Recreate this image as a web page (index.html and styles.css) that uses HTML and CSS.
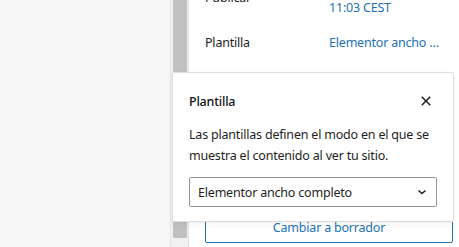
FILE: index.html
```html
<!DOCTYPE html>
<html lang="es">
<head>
<meta charset="utf-8">
<link rel="stylesheet" href="styles.css">
</head>
<body>
<div class="screen">
  <div class="canvas"></div>
  <div class="scrollbar"><div class="thumb"></div></div>
  <aside class="sidebar">
    <div class="rows">
      <div class="row row-tall">
        <span class="label">Publicar</span>
        <span class="value">1 de abril a las<br>11:03 CEST</span>
      </div>
      <div class="row">
        <span class="label">Plantilla</span>
        <span class="value">Elementor ancho …</span>
      </div>
    </div>
    <button class="draft-btn">Cambiar a borrador</button>
  </aside>
  <div class="popover">
    <div class="pop-head">
      <span class="pop-title">Plantilla</span>
      <button class="close" aria-label="Cerrar">
        <svg width="24" height="24" viewBox="0 0 24 24"><path d="M12 13.06l3.712 3.713 1.061-1.06L13.061 12l3.712-3.712-1.06-1.06L12 10.938 8.288 7.227l-1.061 1.06L10.939 12l-3.712 3.712 1.06 1.061L12 13.061z" fill="#1e1e1e"/></svg>
      </button>
    </div>
    <p class="pop-desc">Las plantillas definen el modo en el que se muestra el contenido al ver tu sitio.</p>
    <div class="select">
      <span>Elementor ancho completo</span>
      <svg class="chev" width="12" height="12" viewBox="0 0 12 12"><path d="M2.5 4.5L6 7.5l3.5-3" fill="none" stroke="#1e1e1e" stroke-width="1.5"/></svg>
    </div>
  </div>
</div>
</body>
</html>
```

FILE: styles.css
```css
* { box-sizing: border-box; }
html, body { margin: 0; padding: 0; }
body {
  width: 459px;
  height: 247px;
  overflow: hidden;
  font-family: "Noto Sans", "Open Sans", sans-serif;
  font-size: 12.5px;
  letter-spacing: -0.2px;
  color: #1e1e1e;
  background: #fff;
}
.screen {
  position: relative;
  display: flex;
  width: 459px;
  height: 247px;
  overflow: hidden;
}
.canvas {
  width: 170px;
  flex: none;
  background: #f6f6f6;
}
.scrollbar {
  width: 19px;
  flex: none;
  background: #f1f1f1;
  border-left: 1px solid #e6e6e6;
  border-right: 1px solid #e0e0e0;
  padding: 0 1px 0 2px;
}
.thumb {
  height: 238px;
  background: #c1c1c1;
}
.sidebar {
  flex: 1;
  background: #fff;
  padding: 0 7px 0 16px;
  display: flex;
  flex-direction: column;
}
.rows {
  margin-top: -22px;
  display: flex;
  flex-direction: column;
  gap: 6px;
}
.row {
  display: flex;
  align-items: center;
  min-height: 38px;
  line-height: 20px;
}
.row-tall { min-height: 40px; }
.label { width: 124px; flex: none; }
.value { color: #2271b1; }
.draft-btn {
  margin-top: auto;
  margin-bottom: 4px;
  height: 32px;
  width: 248px;
  background: #fff;
  border: 1px solid #2271b1;
  border-radius: 2px;
  color: #2271b1;
  font: inherit;
  letter-spacing: inherit;
}
.popover {
  position: absolute;
  left: 172px;
  top: 72px;
  width: 282px;
  height: 150px;
  background: #fff;
  border: 1px solid #ddd;
  border-radius: 2px;
  box-shadow: 0 2px 6px rgba(0,0,0,0.06);
  padding: 16px;
}
.pop-head {
  display: flex;
  align-items: center;
  justify-content: space-between;
  height: 24px;
}
.pop-title { font-weight: 500; color: #111; }
.close {
  border: 0;
  background: none;
  padding: 0;
  width: 24px;
  height: 24px;
  margin-right: -1px;
  display: flex;
}
.pop-desc {
  margin: 11px 0 0;
  line-height: 21px;
}
.select {
  margin-top: 11px;
  height: 30px;
  border: 1px solid #949494;
  border-radius: 2px;
  display: flex;
  align-items: center;
  justify-content: space-between;
  padding: 0 8px;
}
```
